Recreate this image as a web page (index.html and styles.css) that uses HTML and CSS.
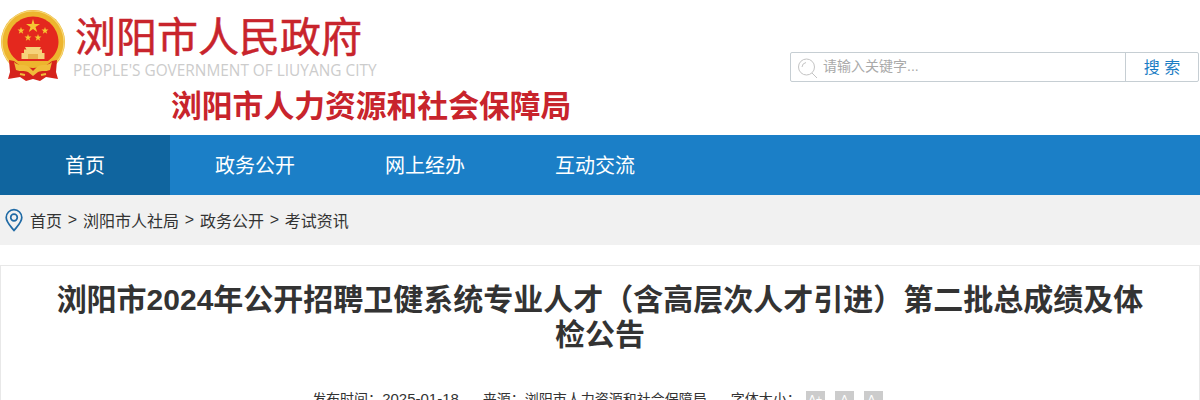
FILE: index.html
```html
<!DOCTYPE html>
<html lang="zh-CN">
<head>
    <meta charset="UTF-8">
    <title>浏阳市2024年公开招聘卫健系统专业人才（含高层次人才引进）第二批总成绩及体检公告</title>
    <link rel="stylesheet" href="styles.css">
</head>
<body>
    <header class="header">
        <div class="brand">
            <div class="brand-top">
                <svg class="emblem" width="66" height="72" viewBox="0 0 66 72">
                    <circle cx="33" cy="32" r="32" fill="#edb52e"/>
                    <circle cx="33" cy="32" r="31" fill="none" stroke="#f6d878" stroke-width="1.200"/>
                    <path d="M18 51 C11 46 7.500 39 7.500 32 C7.500 18 19 6.500 33 6.500 C47 6.500 58.500 18 58.500 32 C58.500 39 55 46 48 51 Z" fill="#e4281e"/>
                    <polygon points="33,9 34.500,14 40,14 35.500,17 37.200,22 33,19 28.800,22 30.500,17 26,14 31.500,14" fill="#f5c633"/>
                    <polygon points="21,17 21.900,19.600 24.500,19.600 22.400,21.200 23.200,23.800 21,22.200 18.800,23.800 19.600,21.200 17.500,19.600 20.100,19.600" fill="#f5c633"/>
                    <polygon points="45,17 45.900,19.600 48.500,19.600 46.400,21.200 47.200,23.800 45,22.200 42.800,23.800 43.600,21.200 41.500,19.600 44.100,19.600" fill="#f5c633"/>
                    <polygon points="28,24 28.900,26.600 31.500,26.600 29.400,28.200 30.200,30.800 28,29.200 25.800,30.800 26.600,28.200 24.500,26.600 27.100,26.600" fill="#f5c633"/>
                    <polygon points="38,24 38.900,26.600 41.500,26.600 39.400,28.200 40.200,30.800 38,29.200 35.800,30.800 36.600,28.200 34.500,26.600 37.100,26.600" fill="#f5c633"/>
                    <path d="M25 37 H41 L39.500 39.500 H42 V43 H44.500 V49 H21.500 V43 H24 V39.500 H26.500 Z" fill="#f6d27a"/>
                    <path d="M28 44 H38 V49 H28 Z" fill="#e9b04a"/>
                    <path d="M9 50 L14 51 L22 57 L33 58 L44 57 L52 51 L57 50 L56 62 L58 69 L46 67 L40 71 L33 69 L26 71 L20 67 L8 69 L10 62 Z" fill="#d5231c"/>
                    <path d="M14 52 C19 57 24 53 29 57 L33 61 L37 57 C42 53 47 57 52 52 L50 60 C45 62 42 60 38 62 L33 66 L28 62 C24 60 21 62 16 60 Z" fill="#f0bd3a"/>
                    <path d="M20 64 L25 65 M41 65 L46 64" stroke="#f0bd3a" stroke-width="2"/>
                </svg>
                <div class="brand-text">
                    <div class="brand-name">浏阳市人民政府</div>
                    <div class="brand-en">PEOPLE'S GOVERNMENT OF LIUYANG CITY</div>
                </div>
            </div>
            <div class="brand-dept">浏阳市人力资源和社会保障局</div>
        </div>
        <form class="search">
            <svg class="search-icon" width="22" height="22" viewBox="0 0 22 22">
                <circle cx="9.500" cy="10" r="8" fill="none" stroke="#c4c4c4" stroke-width="1"/>
                <path d="M5 10 A5 5 0 0 1 9 5.500 M15 16 L20 21" fill="none" stroke="#c4c4c4" stroke-width="1"/>
            </svg>
            <span class="search-input">请输入关键字...</span>
            <span class="search-btn">搜 索</span>
        </form>
    </header>

    <nav class="nav">
        <a class="nav-item active">首页</a>
        <a class="nav-item">政务公开</a>
        <a class="nav-item">网上经办</a>
        <a class="nav-item">互动交流</a>
    </nav>

    <div class="crumb">
        <svg class="pin" width="18" height="24" viewBox="0 0 18 24">
            <path d="M9 22.500 C5 17.500 1.200 14 1.200 9.500 A7.800 7.800 0 0 1 16.800 9.500 C16.800 14 13 17.500 9 22.500 Z" fill="none" stroke="#1f6aa5" stroke-width="1.700"/>
            <circle cx="9" cy="9.500" r="3.300" fill="none" stroke="#1f6aa5" stroke-width="1.700"/>
        </svg>
        <span>首页</span><span class="sep">&gt;</span><span>浏阳市人社局</span><span class="sep">&gt;</span><span>政务公开</span><span class="sep">&gt;</span><span>考试资讯</span>
    </div>

    <main class="article">
        <h1 class="article-title">浏阳市2024年公开招聘卫健系统专业人才（含高层次人才引进）第二批总成绩及体检公告</h1>
        <div class="meta">
            <span>发布时间：<b class="date">2025-01-18</b></span>
            <span>来源：浏阳市人力资源和社会保障局</span>
            <span class="font-size">字体大小：<i class="size-btn">A+</i><i class="size-btn">A</i><i class="size-btn">A-</i></span>
        </div>
    </main>
</body>
</html>
```

FILE: styles.css
```css
html, body {
    margin: 0;
    padding: 0;
    height: 400px;
    overflow: hidden;
    background-color: #fff;
}

body {
    color: #333;
    font-family: "Liberation Sans", "Noto Sans CJK SC", sans-serif;
}

.header {
    display: flex;
    justify-content: space-between;
    height: 135px;
}

.brand-top {
    display: flex;
    padding-top: 10px;
}

.emblem {
    display: block;
    margin-right: 7px;
}

.brand-name {
    color: #c8242c;
    font-size: 41px;
    line-height: 50px;
    margin-left: 2px;
    margin-top: 3px;
    white-space: nowrap;
    -webkit-text-stroke: 0.5px #c8242c;
}

.brand-en {
    color: #ccc;
    font-family: "Open Sans", sans-serif;
    font-size: 15.400px;
    line-height: 16px;
    white-space: nowrap;
}

.brand-dept {
    color: #c8242c;
    font-size: 30.800px;
    font-weight: bold;
    line-height: 36px;
    margin-left: 171px;
    margin-top: 7px;
    white-space: nowrap;
}

.search {
    display: flex;
    align-items: center;
    box-sizing: border-box;
    width: 409px;
    height: 30px;
    margin: 52px 1px 0 0;
    border: 1px solid #c6ced3;
    border-radius: 2px;
}

.search-icon {
    margin: 2px 4px 0 6px;
}

.search-input {
    flex: 1;
    color: #aaa;
    font-size: 14px;
    margin-top: -5px;
}

.search-btn {
    width: 72px;
    height: 28px;
    border-left: 1px solid #c6ced3;
    color: #1b7dc4;
    font-size: 16px;
    line-height: 29px;
    text-align: center;
}

.nav {
    display: flex;
    height: 60px;
    background-color: #1b7fc7;
}

.nav-item {
    width: 170px;
    color: #fff;
    font-size: 20px;
    line-height: 62px;
    text-align: center;
}

.nav-item.active {
    background-color: #10659f;
}

.crumb {
    display: flex;
    align-items: center;
    height: 50px;
    padding-left: 5px;
    background-color: #f1f1f1;
    color: #333;
    font-size: 16px;
}

.pin {
    margin-right: 7px;
}

.sep {
    margin: 0 5.800px;
}

.article {
    box-sizing: border-box;
    height: 300px;
    margin-top: 20px;
    padding: 0 50px;
    border: 1px solid #e8e8e8;
    border-bottom: 0;
}

.article-title {
    margin: 0;
    padding-top: 16px;
    color: #333;
    font-size: 30px;
    font-weight: bold;
    line-height: 35px;
    text-align: center;
}

.meta {
    display: flex;
    justify-content: center;
    gap: 24px;
    margin-top: 36px;
    padding-right: 5px;
    color: #333;
    font-size: 14px;
    line-height: 22px;
}

.date {
    font-size: 15px;
    font-weight: normal;
}

.font-size {
    display: flex;
    align-items: flex-start;
}

.size-btn {
    width: 19px;
    height: 17px;
    margin-top: 3px;
    margin-left: 10px;
    background-color: #ccc;
    color: #fff;
    font-size: 11px;
    font-style: normal;
    line-height: 17px;
    text-align: center;
}

.size-btn:first-of-type {
    margin-left: 5px;
}
```
